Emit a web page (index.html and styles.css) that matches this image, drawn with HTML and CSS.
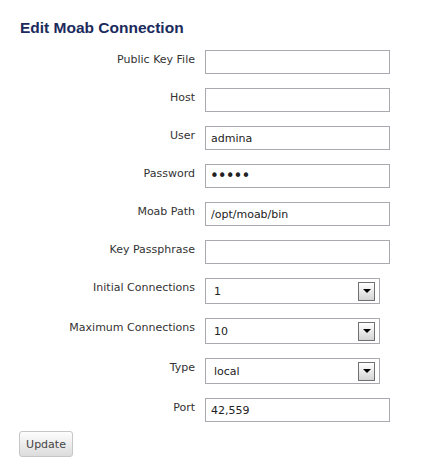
FILE: index.html
```html
<!DOCTYPE html>
<html>
<head>
<meta charset="utf-8">
<link rel="stylesheet" href="styles.css">
</head>
<body>
<div class="page">
  <h1 class="title">Edit Moab Connection</h1>
  <form class="form">
    <label class="lbl">Public Key File</label>
    <input class="txt" type="text" value="">
    <label class="lbl">Host</label>
    <input class="txt" type="text" value="">
    <label class="lbl">User</label>
    <input class="txt" type="text" value="admina">
    <label class="lbl">Password</label>
    <input class="txt pw" type="password" value="admin">
    <label class="lbl">Moab Path</label>
    <input class="txt" type="text" value="/opt/moab/bin">
    <label class="lbl">Key Passphrase</label>
    <input class="txt" type="text" value="">
    <label class="lbl lbl-sel">Initial Connections</label>
    <div class="sel"><span class="sel-val">1</span><span class="sel-btn"><span class="tri"></span></span></div>
    <label class="lbl lbl-sel">Maximum Connections</label>
    <div class="sel"><span class="sel-val">10</span><span class="sel-btn"><span class="tri"></span></span></div>
    <label class="lbl lbl-sel">Type</label>
    <div class="sel"><span class="sel-val">local</span><span class="sel-btn"><span class="tri"></span></span></div>
    <label class="lbl">Port</label>
    <input class="txt" type="text" value="42,559">
  </form>
  <button class="btn" type="button">Update</button>
</div>
</body>
</html>
```
FILE: styles.css
```css
html, body {
  margin: 0;
  padding: 0;
  background: #ffffff;
}
.page {
  font-family: "DejaVu Sans", Verdana, sans-serif;
  color: #333333;
  padding-top: 18px;
}
.title {
  margin: 0 0 12px 20px;
  font-family: "Liberation Sans", Arial, sans-serif;
  font-size: 15.5px;
  line-height: 20px;
  font-weight: bold;
  color: #1b2a5c;
}
.form {
  display: grid;
  grid-template-columns: 195px 185px;
  column-gap: 10px;
  row-gap: 14px;
  align-items: start;
}
.lbl {
  font-size: 11px;
  line-height: 14px;
  text-align: right;
  padding-top: 3px;
  white-space: nowrap;
  color: #333;
}
.txt {
  box-sizing: border-box;
  width: 185px;
  height: 24px;
  margin: 0;
  border: 1px solid #a9a9b0;
  padding: 0 5px;
  font-family: "DejaVu Sans", Verdana, sans-serif;
  font-size: 11px;
  color: #222;
  background: #fff;
  outline: none;
}
.pw {
  font-size: 15px;
  letter-spacing: -1px;
  padding-left: 4px;
}
.sel {
  box-sizing: border-box;
  width: 175px;
  height: 26px;
  border: 1px solid #a9a9b0;
  display: flex;
  align-items: center;
  justify-content: space-between;
  padding: 0 4px 0 8px;
  font-size: 11px;
  color: #222;
  background: #fff;
}
.sel-btn {
  box-sizing: border-box;
  width: 17px;
  height: 19px;
  border: 1px solid #707070;
  background: linear-gradient(#ffffff, #d4d4d4);
  display: flex;
  align-items: center;
  justify-content: center;
}
.tri {
  width: 0;
  height: 0;
  border-left: 4px solid transparent;
  border-right: 4px solid transparent;
  border-top: 4px solid #000;
}
.btn {
  margin: 9px 0 0 19px;
  box-sizing: border-box;
  width: 54px;
  height: 26px;
  border: 1px solid #c6c6c6;
  border-radius: 3px;
  background: linear-gradient(#fdfdfd, #dcdcdc);
  font-family: "DejaVu Sans", Verdana, sans-serif;
  font-size: 11px;
  color: #444;
  padding: 0;
}
```
